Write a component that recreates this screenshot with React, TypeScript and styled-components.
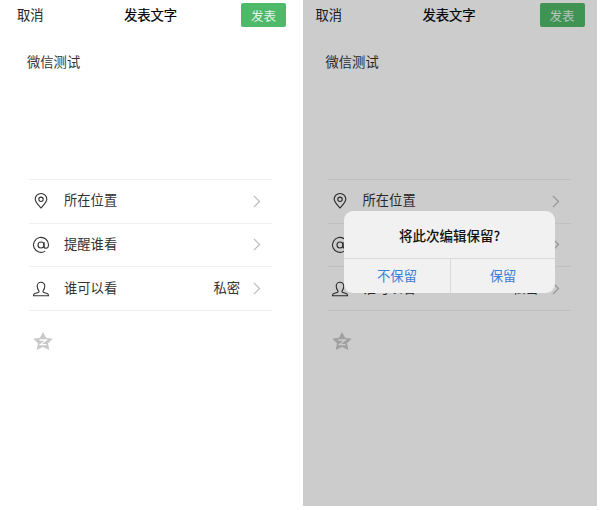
import styled, { createGlobalStyle } from 'styled-components';

const GlobalStyle = createGlobalStyle`
  html, body {
    margin: 0;
    padding: 0;
    background: #fff;
    font-family: "Liberation Sans", "Noto Sans CJK SC", sans-serif;
  }
`;

const PinIcon = () => (
  <svg width='20' height='20' viewBox='0 0 20 20' fill='none' stroke='#333' strokeWidth='1.1'>
    <path d='M10 17C7.400 14.200 4.200 11 4.200 8.300a5.800 5.800 0 0 1 11.600 0C15.800 11 12.600 14.200 10 17z' />
    <circle cx='10' cy='8.300' r='2.200' />
  </svg>
);

const AtIcon = () => (
  <svg width='20' height='20' viewBox='0 0 20 20' fill='none' stroke='#333' strokeWidth='1.1'>
    <circle cx='10' cy='10' r='3' />
    <path d='M13 7v4.200c0 1.300 1 2 2 2 1.400 0 2.500-1.300 2.500-3.400a7.500 7.500 0 1 0-3.300 6.300' />
  </svg>
);

const PersonIcon = () => (
  <svg width='20' height='20' viewBox='0 0 20 20' fill='none' stroke='#333' strokeWidth='1.1'>
    <path d='M7.800 11.800C6.900 10.500 6.200 9 6.200 7a3.800 3.800 0 0 1 7.600 0c0 2-.7 3.500-1.600 4.800-.5.700-.2 1.300.6 1.600l3.400 1.200c1 .4 1.300 1 1.300 2.100H2.500c0-1.100.3-1.700 1.300-2.100l3.400-1.200c.8-.3 1.100-.9.600-1.600z' />
  </svg>
);

const StarIcon = () => (
  <svg width='22' height='22' viewBox='0 0 22 22'>
    <path
      d='M11 1l3 5.800 6.800.9-4.800 4.600 1.300 6.700-6.300-3-6.300 3 1.300-6.700-4.800-4.600 6.800-.9z'
      fill='#c9c9c9'
    />
    <path d='M7.500 9h6.800l-5.800 4.600h6' fill='none' stroke='#fff' strokeWidth='1.300' />
  </svg>
);

const rows = [
  { label: '所在位置', icon: <PinIcon /> },
  { label: '提醒谁看', icon: <AtIcon /> },
  { label: '谁可以看', icon: <PersonIcon />, value: '私密' },
];

const Composer = () => (
  <>
    <Header>
      <HeaderText>取消</HeaderText>
      <Title>发表文字</Title>
      <PublishButton>发表</PublishButton>
    </Header>
    <Body>微信测试</Body>
    <List>
      {rows.map((row) => (
        <Row key={row.label}>
          <IconSlot>{row.icon}</IconSlot>
          <RowLabel>{row.label}</RowLabel>
          {row.value && <RowValue>{row.value}</RowValue>}
          <Chevron viewBox='0 0 8 13'>
            <path d='M1 1l5.500 5.500L1 12' />
          </Chevron>
        </Row>
      ))}
    </List>
    <StarSlot>
      <StarIcon />
    </StarSlot>
  </>
);

const App = () => {
  return (
    <>
      <GlobalStyle />
      <Page>
        <Screen $width={303} $side={17}>
          <Composer />
        </Screen>
        <Screen $width={294} $side={12.5}>
          <Composer />
          <Backdrop />
          <Dialog>
            <DialogTitle>将此次编辑保留?</DialogTitle>
            <DialogActions>
              <DialogButton>不保留</DialogButton>
              <DialogButton>保留</DialogButton>
            </DialogActions>
          </Dialog>
        </Screen>
      </Page>
    </>
  );
};

export default App;

const Page = styled.div`
  display: flex;
  width: 600px;
  height: 510px;
  overflow: hidden;
  background: #fff;
`;

const Screen = styled.div<{ $width: number; $side: number }>`
  position: relative;
  box-sizing: border-box;
  width: ${({ $width }) => $width}px;
  height: 506px;
  padding: 3px ${({ $side }) => $side}px 0;
  overflow: hidden;
  background: #fff;
`;

const Header = styled.div`
  display: flex;
  align-items: center;
  justify-content: space-between;
  height: 24px;
`;

const HeaderText = styled.span`
  width: 43px;
  padding-bottom: 2px;
  font-size: 13.300px;
  color: #222;
`;

const Title = styled.span`
  padding-bottom: 2px;
  font-size: 13.300px;
  color: #000;
  -webkit-text-stroke: 0.2px #000;
`;

const PublishButton = styled.div`
  display: flex;
  align-items: center;
  justify-content: center;
  width: 45px;
  height: 24px;
  border-radius: 2px;
  background: #4fb96a;
  color: #e6f5ea;
  font-size: 12.500px;
`;

const Body = styled.div`
  margin: 26px 0 0 10px;
  height: 20px;
  line-height: 20px;
  font-size: 13.300px;
  color: #333;
`;

const List = styled.div`
  width: 243px;
  margin: 106px 0 0 12px;
  border-bottom: 1px solid #f0f0f0;
`;

const Row = styled.div`
  display: flex;
  align-items: center;
  box-sizing: border-box;
  height: 43.670px;
  padding: 0 11px 3px 2px;
  border-top: 1px solid #f0f0f0;
`;

const IconSlot = styled.div`
  display: flex;
  width: 20px;
  height: 20px;
  margin: 3px 13px 0 0;
`;

const RowLabel = styled.span`
  flex: 1;
  font-size: 13.300px;
  color: #333;
`;

const RowValue = styled.span`
  margin-right: 13px;
  font-size: 13.300px;
  color: #333;
`;

const Chevron = styled.svg`
  width: 8px;
  height: 13px;
  margin-top: 3px;
  fill: none;
  stroke: #bdbdbd;
  stroke-width: 1.2;
`;

const StarSlot = styled.div`
  display: flex;
  margin: 20px 0 0 15px;
`;

const Backdrop = styled.div`
  position: absolute;
  inset: 0;
  background: rgba(0, 0, 0, 0.2);
`;

const Dialog = styled.div`
  position: absolute;
  top: 211px;
  left: 41px;
  display: flex;
  flex-direction: column;
  width: 211px;
  height: 82px;
  border-radius: 9px;
  overflow: hidden;
  background: #f1f1f1;
`;

const DialogTitle = styled.div`
  display: flex;
  align-items: center;
  justify-content: center;
  height: 47px;
  font-family: "Noto Sans CJK SC", sans-serif;
  font-size: 13.500px;
  font-weight: 500;
  color: #111;
`;

const DialogActions = styled.div`
  display: grid;
  flex: 1;
  grid-template-columns: 106px 105px;
  border-top: 1px solid #dadada;
`;

const DialogButton = styled.div`
  display: flex;
  align-items: center;
  justify-content: center;
  padding-bottom: 2px;
  font-size: 13.300px;
  color: #3d7fd9;
  & + & {
    border-left: 1px solid #dadada;
  }
`;
